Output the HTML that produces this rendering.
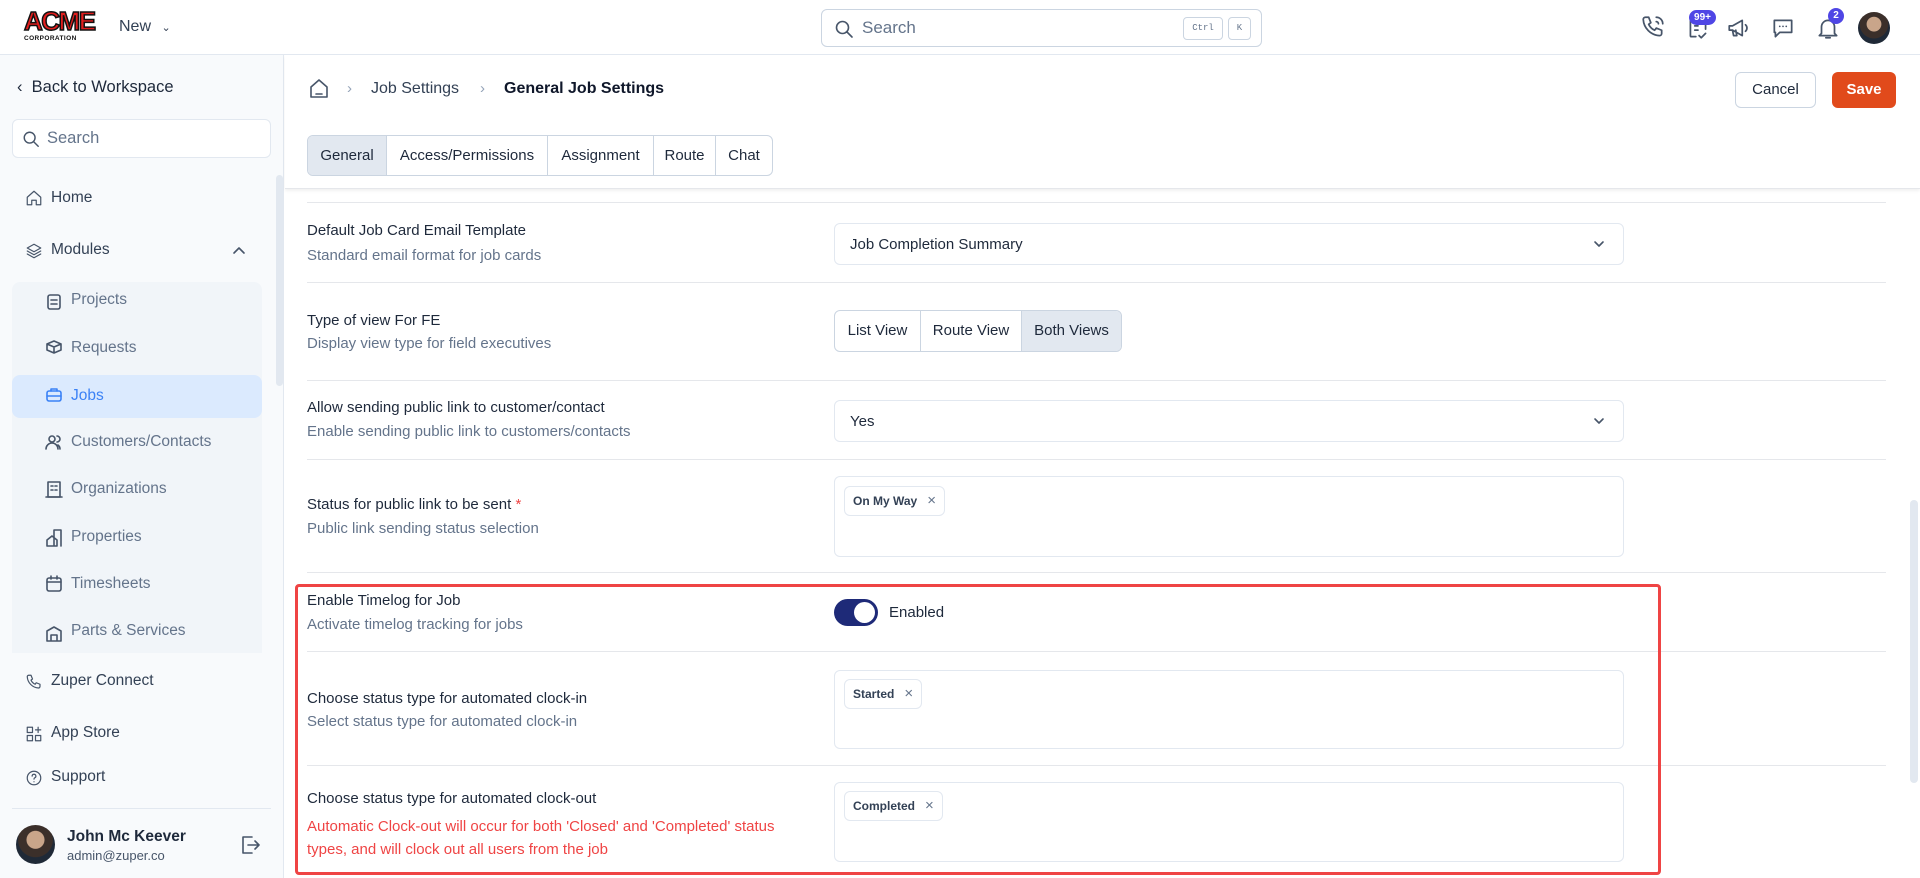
<!DOCTYPE html>
<html><head><meta charset="utf-8">
<style>
*{box-sizing:border-box;margin:0;padding:0}
body{width:1920px;height:878px;overflow:hidden;background:#fff;font-family:"Liberation Sans",sans-serif;color:#1e293b;position:relative}
.a{position:absolute}
.hdr{left:0;top:0;width:1920px;height:55px;border-bottom:1px solid #e2e8f0;background:#fff}
.side{left:0;top:55px;width:284px;height:823px;background:#f8fafc;border-right:1px solid #e2e8f0}
.ico{stroke:#475569;fill:none;stroke-width:1.6;stroke-linecap:round;stroke-linejoin:round}
.nav{position:absolute;font-size:15.5px;color:#334155}
.sub{position:absolute;font-size:15.5px;color:#64748b;left:71px}
.t{position:absolute;left:307px;font-size:15px;color:#1e293b}
.d{position:absolute;left:307px;font-size:15px;color:#64748b}
.line{position:absolute;left:307px;width:1579px;height:1px;background:#e5e7eb}
.box{position:absolute;left:834px;width:790px;border:1px solid #e2e8f0;border-radius:6px;background:#fff}
.chip{position:absolute;left:844px;height:30px;border:1px solid #e2e8f0;border-radius:6px;font-size:12px;font-weight:bold;color:#334155;padding:0 8px;line-height:28px;background:#fff}
.chip span{color:#64748b;font-weight:normal;font-size:15px;margin-left:10px}
</style></head><body>
<div class="a hdr">
  <div class="a" style="left:24px;top:8px;width:72px;height:36px">
    <div style="font:900 26px 'Liberation Sans',sans-serif;color:#e11d1d;letter-spacing:-1.5px;line-height:26px;-webkit-text-stroke:1.5px #111">ACME</div>
    <div style="font:bold 6.5px 'Liberation Sans',sans-serif;color:#111;letter-spacing:.4px;margin-top:1px">CORPORATION</div>
  </div>
  <div class="a" style="left:119px;top:18px;font-size:16px;color:#334155">New <span style="font-size:11px;margin-left:6px">&#8964;</span></div>
  <div class="a" style="left:821px;top:9px;width:441px;height:38px;border:1px solid #cbd5e1;border-radius:6px">
    <svg class="a" style="left:12px;top:9px" width="20" height="20" viewBox="0 0 20 20"><circle cx="8.5" cy="8.5" r="6" class="ico" stroke="#64748b"/><path d="M13 13l5 5" class="ico"/></svg>
    <div class="a" style="left:40px;top:8px;font-size:17px;color:#64748b">Search</div>
    <div class="a" style="left:361px;top:7px;width:40px;height:23px;border:1px solid #cbd5e1;border-radius:4px;font:9px 'Liberation Mono',monospace;color:#64748b;text-align:center;line-height:21px">Ctrl</div>
    <div class="a" style="left:406px;top:7px;width:23px;height:23px;border:1px solid #cbd5e1;border-radius:4px;font:9px 'Liberation Mono',monospace;color:#64748b;text-align:center;line-height:21px">K</div>
  </div>
  <svg class="a" style="left:1640px;top:14px" width="26" height="26" viewBox="0 0 24 24"><path class="ico" d="M5 3h3l2 5-2 1.5a11 11 0 0 0 5.5 5.5L15 13l5 2v3a2 2 0 0 1-2 2A16 16 0 0 1 3 5a2 2 0 0 1 2-2z M15 3a6 6 0 0 1 6 6 M15 7a2 2 0 0 1 2 2"/></svg>
  <svg class="a" style="left:1685px;top:15px" width="26" height="26" viewBox="0 0 24 24"><path class="ico" d="M9 4H6a1 1 0 0 0-1 1v14a1 1 0 0 0 1 1h4 M15 4h3a1 1 0 0 1 1 1v8 M9 10h3 M9 14h3 M13 19l2 2 4-4"/></svg>
  <div class="a" style="left:1689px;top:10px;width:27px;height:15px;border-radius:8px;background:#4f46e5;color:#fff;font-size:10px;font-weight:bold;text-align:center;line-height:15px">99+</div>
  <svg class="a" style="left:1726px;top:15px" width="26" height="26" viewBox="0 0 24 24"><path class="ico" d="M3 10v4h3l9 5V5L6 10H3z M6 14l1 5h3l-1-5 M18 9a4 4 0 0 1 0 6"/></svg>
  <svg class="a" style="left:1770px;top:15px" width="26" height="26" viewBox="0 0 24 24"><path class="ico" d="M4 5h16v11H9l-4 4v-4H4z"/><circle cx="9" cy="10.5" r=".8" fill="#475569"/><circle cx="12" cy="10.5" r=".8" fill="#475569"/><circle cx="15" cy="10.5" r=".8" fill="#475569"/></svg>
  <svg class="a" style="left:1815px;top:15px" width="26" height="26" viewBox="0 0 24 24"><path class="ico" d="M6 17V11a6 6 0 0 1 12 0v6l2 2H4z M10 21h4"/></svg>
  <div class="a" style="left:1828px;top:8px;width:16px;height:16px;border-radius:8px;background:#4f46e5;color:#fff;font-size:10px;font-weight:bold;text-align:center;line-height:16px">2</div>
  <div class="a" style="left:1858px;top:12px;width:32px;height:32px;border-radius:16px;background:radial-gradient(circle at 50% 38%,#c9a58a 0 28%,#3b2f2a 30% 55%,#1f2937 57%)"></div>
</div>

<div class="a side">
  <div class="nav" style="left:17px;top:23px;font-size:16.5px;color:#1e293b">&#8249;&nbsp; Back to Workspace</div>
  <div class="a" style="left:12px;top:64px;width:259px;height:39px;border:1px solid #e2e8f0;border-radius:6px;background:#fff">
    <svg class="a" style="left:9px;top:10px" width="18" height="18" viewBox="0 0 20 20"><circle cx="8.5" cy="8.5" r="6" class="ico" stroke="#64748b"/><path d="M13 13l5 5" class="ico"/></svg>
    <div class="a" style="left:34px;top:9px;font-size:16.5px;color:#64748b">Search</div>
  </div>
  <div class="a" style="left:276px;top:120px;width:7px;height:211px;border-radius:4px;background:#e2e8f0"></div>
  <svg class="a" style="left:25px;top:134px" width="18" height="18" viewBox="0 0 24 24"><path class="ico" d="M3 11l9-8 9 8v10h-6v-6H9v6H3z"/></svg>
  <div class="nav" style="left:51px;top:134px">Home</div>
  <svg class="a" style="left:25px;top:187px" width="18" height="18" viewBox="0 0 24 24"><path class="ico" d="M12 3l9 5-9 5-9-5z M3 12l9 5 9-5 M3 16l9 5 9-5"/></svg>
  <div class="nav" style="left:51px;top:186px">Modules</div>
  <svg class="a" style="left:232px;top:189px" width="14" height="14" viewBox="0 0 14 14"><path class="ico" d="M2 9l5-5 5 5"/></svg>
  <div class="a" style="left:12px;top:227px;width:250px;height:371px;background:#f1f5f9;border-radius:8px 8px 0 0"></div>
  <div class="a" style="left:12px;top:320px;width:250px;height:43px;background:#dbeafe;border-radius:8px"></div>
  <div class="sub" style="top:236px">Projects</div>
  <div class="sub" style="top:284px">Requests</div>
  <div class="sub" style="top:332px;color:#3b82f6">Jobs</div>
  <div class="sub" style="top:378px">Customers/Contacts</div>
  <div class="sub" style="top:425px">Organizations</div>
  <div class="sub" style="top:473px">Properties</div>
  <div class="sub" style="top:520px">Timesheets</div>
  <div class="sub" style="top:567px">Parts &amp; Services</div>
  <svg class="a" style="left:45px;top:237px" width="18" height="380" viewBox="0 0 18 380"><g class="ico" stroke="#64748b">
    <rect x="3" y="3" width="12" height="14" rx="2"/><path d="M6 8h6M6 12h6"/>
    <path d="M9 49l7 3v6l-7 3-7-3v-6z M2 52l7 3 7-3 M9 55v6"/>
    <rect x="2" y="99" width="14" height="10" rx="2" stroke="#3b82f6"/><path d="M6 99v-2h6v2 M2 104h14" stroke="#3b82f6"/>
    <circle cx="7" cy="147" r="3"/><path d="M1 157a6 6 0 0 1 12 0 M12 144a3 3 0 0 1 0 6 M15 157a5 5 0 0 0-2-4"/>
    <rect x="3" y="190" width="12" height="15"/><path d="M6 194h2M10 194h2M6 198h2M10 198h2M1 205h16"/>
    <path d="M2 254v-6l5-4 5 4v6z M9 254v-16h7v16"/>
    <rect x="2" y="286" width="14" height="13" rx="2"/><path d="M2 290h14M6 284v3M12 284v3"/>
    <path d="M2 349v-10l7-4 7 4v10z M6 349v-6h6v6"/>
  </g></svg>
  <svg class="a" style="left:25px;top:618px" width="18" height="18" viewBox="0 0 24 24"><path class="ico" d="M5 3h3l2 5-2 1.5a11 11 0 0 0 5.5 5.5L15 13l5 2v3a2 2 0 0 1-2 2A16 16 0 0 1 3 5a2 2 0 0 1 2-2z"/></svg>
  <div class="nav" style="left:51px;top:617px">Zuper Connect</div>
  <svg class="a" style="left:25px;top:670px" width="18" height="18" viewBox="0 0 24 24"><path class="ico" d="M3 3h7v7H3z M3 14h7v7H3z M14 14h7v7h-7z M17.5 3v7 M14 6.5h7"/></svg>
  <div class="nav" style="left:51px;top:669px">App Store</div>
  <svg class="a" style="left:25px;top:714px" width="18" height="18" viewBox="0 0 24 24"><circle cx="12" cy="12" r="9" class="ico"/><path class="ico" d="M9.5 9.5a2.5 2.5 0 1 1 3.5 2.3c-.7.3-1 1-1 1.7 M12 17h.01"/></svg>
  <div class="nav" style="left:51px;top:713px">Support</div>
  <div class="a" style="left:12px;top:753px;width:259px;height:1px;background:#e2e8f0"></div>
  <div class="a" style="left:16px;top:770px;width:39px;height:39px;border-radius:20px;background:radial-gradient(circle at 50% 38%,#c9a58a 0 28%,#3b2f2a 30% 55%,#1f2937 57%)"></div>
  <div class="a" style="left:67px;top:773px;font-size:15.5px;font-weight:bold;color:#1e293b">John Mc Keever</div>
  <div class="a" style="left:67px;top:793px;font-size:13px;color:#475569">admin@zuper.co</div>
  <svg class="a" style="left:238px;top:778px" width="24" height="24" viewBox="0 0 24 24"><path class="ico" stroke="#64748b" d="M14 4H5v16h9 M10 12h11 M17 8l4 4-4 4"/></svg>
</div>

<div class="a" style="left:285px;top:55px;width:1635px;height:134px;background:#fff;box-shadow:0 2px 3px rgba(0,0,0,.06);border-bottom:1px solid #e5e7eb"></div>
<svg class="a" style="left:307px;top:77px" width="24" height="24" viewBox="0 0 24 24"><path class="ico" d="M4 10l8-7 8 7v10H4z M9 17h6"/></svg>
<div class="a" style="left:347px;top:80px;color:#94a3b8;font-size:15px">&#8250;</div>
<div class="a" style="left:371px;top:80px;font-size:16px;color:#334155">Job Settings</div>
<div class="a" style="left:480px;top:80px;color:#94a3b8;font-size:15px">&#8250;</div>
<div class="a" style="left:504px;top:80px;font-size:16px;font-weight:bold;color:#0f172a">General Job Settings</div>
<div class="a" style="left:1735px;top:72px;width:81px;height:36px;border:1px solid #cbd5e1;border-radius:6px;font-size:15px;text-align:center;line-height:34px;color:#1e293b">Cancel</div>
<div class="a" style="left:1832px;top:72px;width:64px;height:36px;background:#e14a1b;border-radius:6px;font-size:15px;font-weight:bold;text-align:center;line-height:36px;color:#fff">Save</div>
<div class="a" style="left:307px;top:135px;height:41px;border:1px solid #cbd5e1;border-radius:6px;display:flex;overflow:hidden;font-size:15px;color:#1e293b">
  <div style="width:79px;background:#e2e8f0;text-align:center;line-height:39px;border-right:1px solid #cbd5e1">General</div>
  <div style="width:161px;text-align:center;line-height:39px;border-right:1px solid #cbd5e1">Access/Permissions</div>
  <div style="width:106px;text-align:center;line-height:39px;border-right:1px solid #cbd5e1">Assignment</div>
  <div style="width:62px;text-align:center;line-height:39px;border-right:1px solid #cbd5e1">Route</div>
  <div style="width:56px;text-align:center;line-height:39px">Chat</div>
</div>

<div class="line" style="top:202px"></div>
<div class="t" style="top:222px">Default Job Card Email Template</div>
<div class="d" style="top:247px">Standard email format for job cards</div>
<div class="box" style="top:223px;height:42px"><div class="a" style="left:15px;top:12px;font-size:15px">Job Completion Summary</div><svg class="a" style="left:758px;top:15px" width="12" height="10" viewBox="0 0 12 10"><path class="ico" stroke="#1e293b" d="M2 3l4 4 4-4"/></svg></div>
<div class="line" style="top:282px"></div>
<div class="t" style="top:312px">Type of view For FE</div>
<div class="d" style="top:335px">Display view type for field executives</div>
<div class="a" style="left:834px;top:310px;width:288px;height:42px;border:1px solid #cbd5e1;border-radius:6px;display:flex;overflow:hidden;font-size:15px">
  <div style="width:86px;text-align:center;line-height:40px;border-right:1px solid #cbd5e1">List View</div>
  <div style="width:101px;text-align:center;line-height:40px;border-right:1px solid #cbd5e1">Route View</div>
  <div style="flex:1;text-align:center;line-height:40px;background:#e2e8f0">Both Views</div>
</div>
<div class="line" style="top:380px"></div>
<div class="t" style="top:399px">Allow sending public link to customer/contact</div>
<div class="d" style="top:423px">Enable sending public link to customers/contacts</div>
<div class="box" style="top:400px;height:42px"><div class="a" style="left:15px;top:12px;font-size:15px">Yes</div><svg class="a" style="left:758px;top:15px" width="12" height="10" viewBox="0 0 12 10"><path class="ico" stroke="#1e293b" d="M2 3l4 4 4-4"/></svg></div>
<div class="line" style="top:459px"></div>
<div class="t" style="top:496px">Status for public link to be sent <span style="color:#ef4444">*</span></div>
<div class="d" style="top:520px">Public link sending status selection</div>
<div class="box" style="top:476px;height:81px"></div>
<div class="chip" style="top:486px">On My Way<span>&#215;</span></div>
<div class="line" style="top:572px"></div>
<div class="t" style="top:592px">Enable Timelog for Job</div>
<div class="d" style="top:616px">Activate timelog tracking for jobs</div>
<div class="a" style="left:834px;top:599px;width:44px;height:27px;border-radius:14px;background:#1e2a78"><div class="a" style="left:20px;top:3px;width:21px;height:21px;border-radius:11px;background:#fff"></div></div>
<div class="a" style="left:889px;top:604px;font-size:15px">Enabled</div>
<div class="line" style="top:651px"></div>
<div class="t" style="top:690px">Choose status type for automated clock-in</div>
<div class="d" style="top:713px">Select status type for automated clock-in</div>
<div class="box" style="top:670px;height:79px"></div>
<div class="chip" style="top:679px">Started<span>&#215;</span></div>
<div class="line" style="top:765px"></div>
<div class="t" style="top:790px">Choose status type for automated clock-out</div>
<div class="d" style="top:815px;color:#ef4444;line-height:23px;width:490px">Automatic Clock-out will occur for both 'Closed' and 'Completed' status types, and will clock out all users from the job</div>
<div class="box" style="top:782px;height:80px"></div>
<div class="chip" style="top:791px">Completed<span>&#215;</span></div>
<div class="a" style="left:295px;top:584px;width:1366px;height:291px;border:3px solid #ef4444;border-radius:4px"></div>
<div class="a" style="left:1910px;top:500px;width:8px;height:283px;border-radius:4px;background:#e2e8f0"></div>
</body></html>
